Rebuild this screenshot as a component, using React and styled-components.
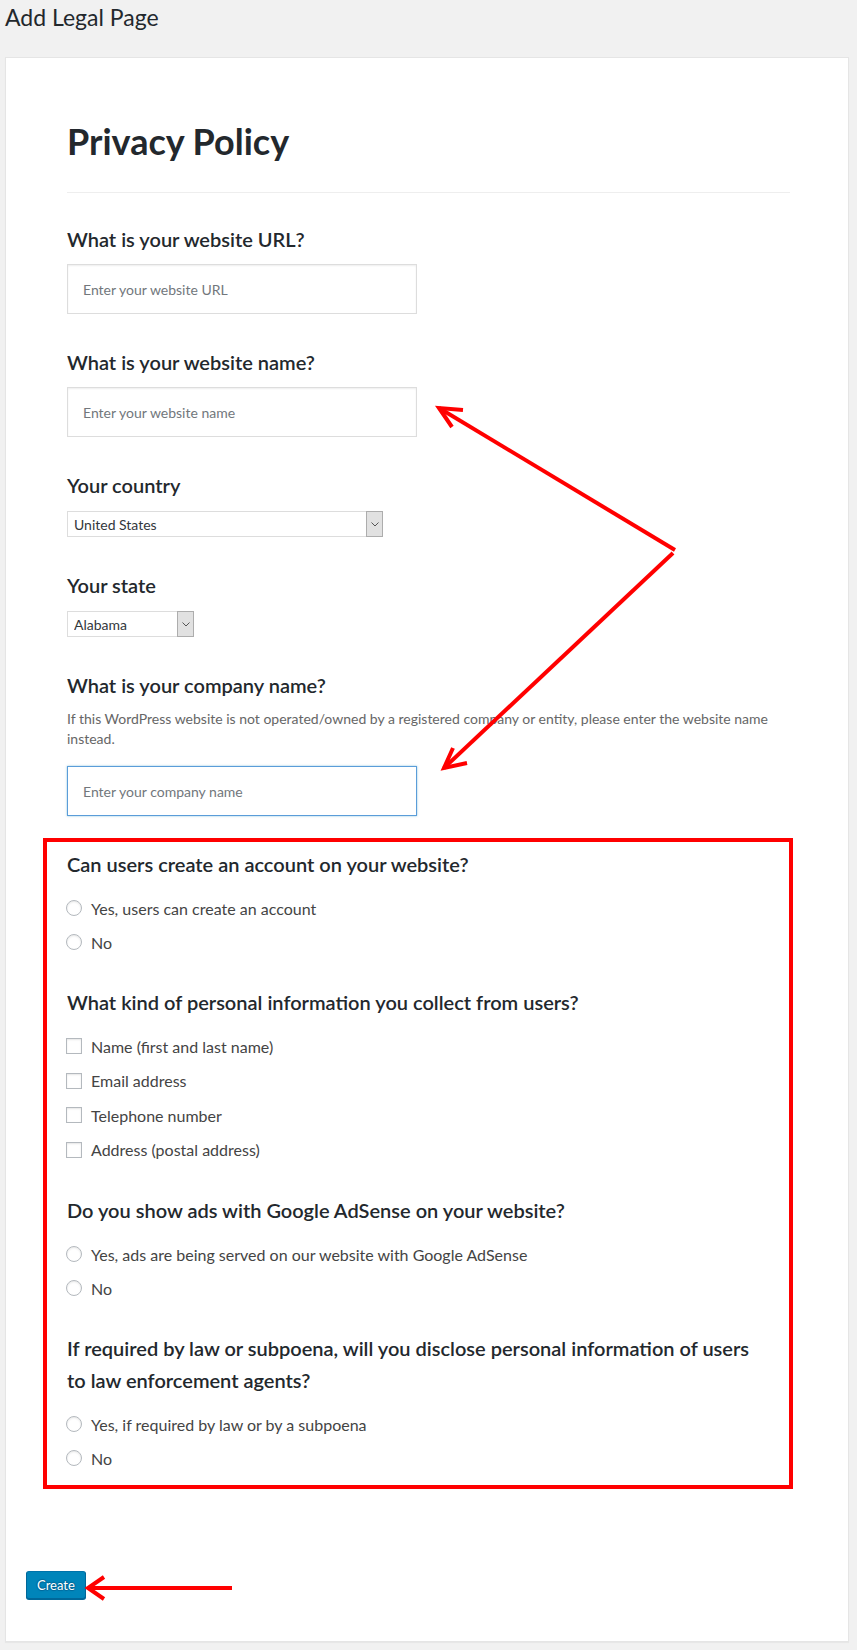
import React from 'react';
import styled, { createGlobalStyle } from 'styled-components';

const GlobalStyle = createGlobalStyle`
  html, body { margin: 0; padding: 0; background: #f1f1f1; }
  body { font-family: Lato, "Noto Sans", sans-serif; color: #23282d; }
  * { box-sizing: border-box; }
`;

const Page = styled.div`
  position: relative;
  width: 857px;
  min-height: 1650px;
  padding: 3px 8px 7px 5px;
`;

const PageTitle = styled.h1`
  margin: 0 0 25px;
  font-size: 23px;
  font-weight: 400;
  line-height: 29px;
  color: #23282d;
`;

const Card = styled.form`
  background: #fff;
  border: 1px solid #e5e5e5;
  box-shadow: 0 1px 1px rgba(0, 0, 0, 0.04);
  padding: 20px 20px 42px;
`;

const Body = styled.div`
  padding: 42px 38px 0 41px;
`;

const Heading = styled.h2`
  margin: 0;
  font-size: 36px;
  font-weight: 700;
  line-height: 43px;
  color: #23282d;
`;

const Rule = styled.hr`
  margin: 29px 0 30px;
  border: 0;
  border-top: 1px solid #eee;
`;

const Fields = styled.div`
  display: flex;
  flex-direction: column;
  gap: 32px;
`;

const Field = styled.div`
  display: flex;
  flex-direction: column;
  align-items: flex-start;
`;

const Label = styled.div`
  font-size: 20px;
  font-weight: 600;
  line-height: 32px;
  color: #23282d;
  margin-bottom: ${(p) => (p.$tight ? 11 : 9)}px;
`;

const Desc = styled.p`
  margin: -1px 0 17px;
  font-size: 14px;
  line-height: 20px;
  color: #666;
`;

const TextInput = styled.input`
  width: 350px;
  height: 50px;
  padding: 0 15px;
  border: 1px solid ${(p) => (p.$focused ? '#5b9dd9' : '#ddd')};
  box-shadow: ${(p) =>
    p.$focused ? '0 0 2px rgba(30, 140, 190, 0.5)' : 'inset 0 1px 2px rgba(0, 0, 0, 0.07)'};
  background: #fff;
  font-family: Lato, "Noto Sans", sans-serif;
  font-size: 14px;
  color: #32373c;
  outline: none;
  &::placeholder { color: #72777c; }
`;

const SelectWrap = styled.div`
  display: flex;
  width: ${(p) => p.$w}px;
  height: 26px;
  margin-top: 1px;
  border: 1px solid #ddd;
  background: #fff;
`;

const SelectEl = styled.select`
  appearance: none;
  flex: 1;
  min-width: 0;
  border: 0;
  background: transparent;
  padding: 0 6px;
  font-family: Lato, "Noto Sans", sans-serif;
  font-size: 14px;
  color: #32373c;
  outline: none;
`;

const ArrowBox = styled.span`
  width: 17px;
  margin: -1px -1px -1px 0;
  border: 1px solid #adadad;
  background: #e1e1e1;
  display: flex;
  align-items: center;
  justify-content: center;
`;

const AnnotBox = styled.div`
  margin: 22px -3px 0 -24px;
  border: 4px solid #ff0000;
  padding: 6px 20px 10px;
`;

const Questions = styled.div`
  display: flex;
  flex-direction: column;
  gap: 27px;
`;

const Options = styled.div`
  display: flex;
  flex-direction: column;
`;

const Option = styled.label`
  display: flex;
  align-items: center;
  height: ${(p) => p.$h}px;
  font-size: 16px;
  color: #444;
`;

const Radio = styled.input.attrs({ type: 'radio' })`
  appearance: none;
  width: 16px;
  height: 16px;
  margin: 0 9px 0 -1px;
  border: 1px solid #b4b9be;
  border-radius: 50%;
  background: #fff;
  box-shadow: inset 0 1px 2px rgba(0, 0, 0, 0.1);
  flex: none;
`;

const Check = styled.input.attrs({ type: 'checkbox' })`
  appearance: none;
  width: 16px;
  height: 16px;
  margin: 0 9px 0 -1px;
  border: 1px solid #b4b9be;
  background: #fff;
  box-shadow: inset 0 1px 2px rgba(0, 0, 0, 0.1);
  flex: none;
`;

const Button = styled.button`
  display: block;
  margin-top: 82px;
  height: 28px;
  padding: 0 10px 1px;
  border: 1px solid;
  border-color: #0073aa #006799 #006799;
  border-radius: 3px;
  background: #0085ba;
  box-shadow: 0 1px 0 #006799;
  color: #fff;
  font-family: Lato, "Noto Sans", sans-serif;
  font-size: 13px;
  line-height: 26px;
  text-shadow: 0 -1px 1px #006799, 1px 0 1px #006799, 0 1px 1px #006799, -1px 0 1px #006799;
`;

const Overlay = styled.svg`
  position: absolute;
  top: 0;
  left: 0;
  pointer-events: none;
`;

const Chevron = () => (
  <svg width="8" height="5" viewBox="0 0 8 5">
    <path d="M0.5 0.5 L4 4 L7.5 0.5" fill="none" stroke="#555" strokeWidth="1" />
  </svg>
);

const Select = ({ w, value }) => (
  <SelectWrap $w={w}>
    <SelectEl defaultValue={value}>
      <option>{value}</option>
    </SelectEl>
    <ArrowBox>
      <Chevron />
    </ArrowBox>
  </SelectWrap>
);

const questions = [
  {
    q: 'Can users create an account on your website?',
    type: 'radio',
    name: 'account',
    opts: ['Yes, users can create an account', 'No'],
  },
  {
    q: 'What kind of personal information you collect from users?',
    type: 'check',
    name: 'info',
    opts: ['Name (first and last name)', 'Email address', 'Telephone number', 'Address (postal address)'],
  },
  {
    q: 'Do you show ads with Google AdSense on your website?',
    type: 'radio',
    name: 'ads',
    opts: ['Yes, ads are being served on our website with Google AdSense', 'No'],
  },
  {
    q: 'If required by law or subpoena, will you disclose personal information of users to law enforcement agents?',
    type: 'radio',
    name: 'law',
    opts: ['Yes, if required by law or by a subpoena', 'No'],
  },
];

export default function App() {
  return (
    <Page>
      <GlobalStyle />
      <PageTitle>Add Legal Page</PageTitle>
      <Card onSubmit={(e) => e.preventDefault()}>
        <Body>
          <Heading>Privacy Policy</Heading>
          <Rule />
          <Fields>
            <Field>
              <Label>What is your website URL?</Label>
              <TextInput placeholder="Enter your website URL" />
            </Field>
            <Field>
              <Label>What is your website name?</Label>
              <TextInput placeholder="Enter your website name" />
            </Field>
            <Field>
              <Label>Your country</Label>
              <Select w={316} value="United States" />
            </Field>
            <Field>
              <Label>Your state</Label>
              <Select w={127} value="Alabama" />
            </Field>
            <Field>
              <Label>What is your company name?</Label>
              <Desc>
                If this WordPress website is not operated/owned by a registered company or entity, please enter the website name instead.
              </Desc>
              <TextInput $focused placeholder="Enter your company name" />
            </Field>
          </Fields>
          <AnnotBox>
            <Questions>
              {questions.map((item) => (
                <div key={item.name}>
                  <Label $tight>{item.q}</Label>
                  <Options>
                    {item.opts.map((o) => (
                      <Option key={o} $h={item.type === 'check' ? 34.5 : 34}>
                        {item.type === 'check' ? <Check /> : <Radio name={item.name} />}
                        {o}
                      </Option>
                    ))}
                  </Options>
                </div>
              ))}
            </Questions>
          </AnnotBox>
        </Body>
        <Button type="submit">Create</Button>
      </Card>
      <Overlay width="857" height="1650" viewBox="0 0 857 1650">
        <g fill="none" stroke="#ff0000" strokeWidth="4" strokeLinejoin="miter">
          <path d="M675 550 L439 408" />
          <path d="M463 410 L439 408 L452 427" />
          <path d="M673 553 L444 768" />
          <path d="M453 748 L444 768 L467 763" />
          <path d="M232 1588 L88 1588" />
          <path d="M104 1577 L88 1588 L104 1599" />
        </g>
      </Overlay>
    </Page>
  );
}
